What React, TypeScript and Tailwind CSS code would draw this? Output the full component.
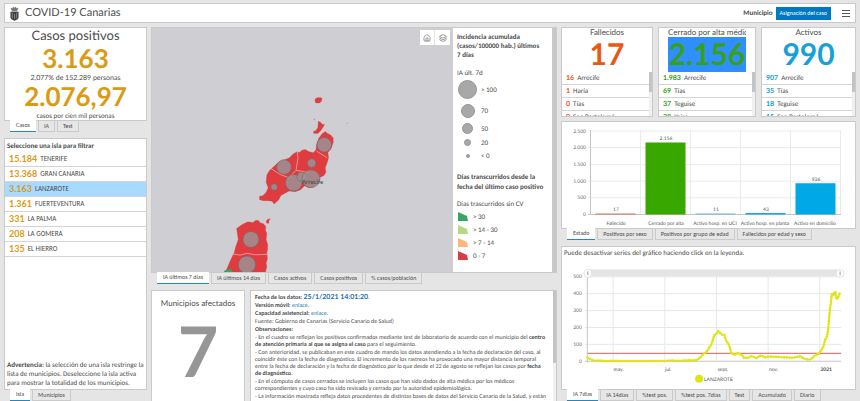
import type { ReactNode } from "react";
import { House, Layers } from "lucide-react";

const card = "bg-white border border-[#cacaca] overflow-hidden";
const display = "font-['Lato','Liberation_Sans',sans-serif]";

function Tabs({ items, label }: { items: string[]; label: string }) {
  return (
    <div role="tablist" aria-label={label} className="flex gap-[2px] pl-[6px] h-[12px] shrink-0 -mt-px relative">
      {items.map((t, i) => (
        <button
          key={t}
          role="tab"
          aria-selected={i === 0}
          className={
            i === 0
              ? "bg-white border-b border-[#2a86b8] px-[6px] text-[6px] leading-[11px] whitespace-nowrap text-[#4c4c4c]"
              : "bg-[#e6e6e6] border border-[#cacaca] px-[5px] text-[6px] leading-[10px] whitespace-nowrap text-[#4c4c4c]"
          }
        >
          {t}
        </button>
      ))}
    </div>
  );
}

const islands: [string, string][] = [
  ["15.184", "TENERIFE"],
  ["13.368", "GRAN CANARIA"],
  ["3.163", "LANZAROTE"],
  ["1.361", "FUERTEVENTURA"],
  ["331", "LA PALMA"],
  ["208", "LA GOMERA"],
  ["135", "EL HIERRO"],
];

function Crest() {
  return (
    <svg viewBox="0 0 20 32" className="w-[9px] h-[15px]" aria-hidden="true">
      <path d="M3 8 1 3l4 2 2-4 3 2 3-2 2 4 4-2-2 5Z" fill="#777" />
      <path d="M4 9h12v2H4Z" fill="#333" />
      <path d="M1 12h18v13q0 4-9 7-9-3-9-7Z" fill="#3c3c3c" />
      <path d="M5 14v13M10 17v11M15 14v13" stroke="#aaa" strokeWidth="1.5" />
    </svg>
  );
}

function Stat({
  title,
  value,
  rows,
  tone,
  selected,
}: {
  title: string;
  value: string;
  rows: [string, string][];
  tone: string;
  selected?: boolean;
}) {
  return (
    <section className={`${card} flex flex-col min-w-0`}>
      <div className={`${display} h-[44px] shrink-0 flex flex-col items-center overflow-hidden ${selected ? "mx-[9px]" : ""}`}>
        <h2 className="text-[8px] leading-[9px] whitespace-nowrap text-[#4c4c4c] max-w-full overflow-hidden shrink-0">{title}</h2>
        <p className={`text-[30px] leading-[35px] font-bold ${tone} ${selected ? "bg-[#2f8fff] w-full text-center" : ""}`}>{value}</p>
      </div>
      <div className="flex flex-1 min-h-0">
        <ul className="flex-1 overflow-hidden">
          {rows.map(([n, name]) => (
            <li key={name} className="h-[13px] border-b border-[#d4d4d4] pl-[4px] text-[7px] leading-[12px] whitespace-nowrap flex gap-[3px]">
              <span className={`${display} font-bold ${tone}`}>{n}</span>
              <span className="text-[#4c4c4c]">{name}</span>
            </li>
          ))}
        </ul>
        <div className="w-[3px] bg-[#f0f0f0]">
          <div className="h-[20px] bg-[#c4c4c4]" />
        </div>
      </div>
    </section>
  );
}

function IslandMap() {
  const bubbles = [
    [343, 193, 22], [305, 248, 13], [222, 260, 22], [192, 320, 10],
    [251, 307, 25], [275, 289, 14], [303, 295, 27], [122, 478, 24], [110, 554, 26],
  ];
  return (
    <svg viewBox="-177 -159 909 735" preserveAspectRatio="xMidYMid slice" className="w-full h-full" role="img" aria-label="Mapa de Lanzarote y Fuerteventura">
      <g fill="#e03c40" stroke="#c9484c" strokeWidth="1">
        <path d="M316 54l8-4 12 2-1 9-6 6-11 0-3-6Z" />
        <path d="M325 122l7 3 5 6 7 1-6 10-7 10-8 7-12-1 0-5 8-4 5-9Z" />
        <path d="M336 160L346 153 352 158 362 163 370 172 370 186 364 204 354 216 356 232 352 246 346 262 348 276 341 286 328 292 322 310 308 320 296 322 284 316 272 328 256 334 238 332 222 340 212 346 206 358 198 366 192 371 186 363 174 361 160 361 148 358 148 348 158 346 168 336 174 322 168 306 170 284 178 270 196 254 208 243 224 238 238 232 250 220 261 214 268 216 276 209 286 207 296 213 310 217 318 208 320 192 326 174Z" />
        <path d="M168 423l4-5 8-3-4 8 0 6-6 0Z" />
        <path d="M79 445l18-13 16-7 15 2 9-7 8 1 5 7 10 3 7 8-1 12 4 8-2 20 5 15-1 16-2 8 2 17-4 15 2 10-4 16-3 10H40l10-20 10-24 12-25 4-16 8-23Z" />
      </g>
      <path d="M40 576q4-9 24-8l4 8Z" fill="#2fa864" />
      <path d="M320 212l32 20M182 264l28 18 26 10 22-22 40 6M262 214l2 18-6 38M60 521l30 4 20-5 26 4 34-1" fill="none" stroke="#f2bfc0" strokeWidth="2" />
      {bubbles.map(([x, y, r]) => (
        <circle key={`${x}-${y}`} cx={x} cy={y} r={r} fill="#989698" fillOpacity="0.8" stroke="#77696b" strokeWidth="2" />
      ))}
      <text x="308" y="311" textAnchor="middle" fontSize="20" fill="#444">Arrecife</text>
      <path d="M312 118l3-4M411 128h2" stroke="#667" strokeWidth="2" />
    </svg>
  );
}

const sizes: [string, string, string][] = [
  ["> 100", "size-[19px]", "h-[21px]"],
  ["70", "size-[14px]", "h-[21px]"],
  ["50", "size-[11px]", "h-[14px]"],
  ["20", "size-[7px]", "h-[14px]"],
  ["< 0", "size-[4px]", "h-[13px]"],
];

const days: [string, string][] = [
  ["> 30", "#3ba462"],
  ["> 14 - 30", "#b4da84"],
  ["> 7 - 14", "#fbb87c"],
  ["0 - 7", "#d83c44"],
];

function Legend() {
  return (
    <aside className="w-[103px] shrink-0 bg-white flex">
      <div className="flex-1 pl-[4px] pt-[4px] text-[#4c4c4c]">
        <h3 className="text-[7px] leading-[9px] font-bold whitespace-nowrap">
          Incidencia acumulada<br />(casos/100000 hab.) últimos<br />7 días
        </h3>
        <p className="mt-[9px] text-[7px] leading-[9px]">IA últ. 7d</p>
        <ul className="mt-[2px]">
          {sizes.map(([t, s, h]) => (
            <li key={t} className={`flex items-center gap-[3px] text-[7px] leading-[9px] ${h}`}>
              <span className="w-[21px] flex justify-center">
                <span className={`rounded-full bg-[#a8a8a8] border border-[#969696] ${s}`} />
              </span>
              {t}
            </li>
          ))}
        </ul>
        <h3 className="mt-[10px] text-[7px] leading-[10px] font-bold whitespace-nowrap">
          Días transcurridos desde la<br />fecha del último caso positivo
        </h3>
        <p className="mt-[7px] text-[7px] leading-[9px]">Días trascurridos sin CV</p>
        <ul className="mt-[2px]">
          {days.map(([t, c]) => (
            <li key={t} className="h-[13px] flex items-center gap-[5px] pl-[1px] text-[7px] leading-[9px]">
              <svg viewBox="0 0 10 9" className="w-[10px] h-[9px]" aria-hidden="true">
                <path d="M0 0 9 4 10 9H0Z" fill={c} />
              </svg>
              {t}
            </li>
          ))}
        </ul>
      </div>
      <div className="w-[4px] bg-[#e8e8e8]">
        <div className="h-full bg-[#c8c8c8]" />
      </div>
    </aside>
  );
}

function BarChart() {
  const bars: [string, string, number, string, number][] = [
    ["Fallecido", "17", 17, "#c8765a", 55],
    ["Cerrado por alta", "2.156", 2156, "#38a800", 105],
    ["Activo hosp. en UCI", "11", 11, "#6fb4d8", 154],
    ["Activo hosp. en planta", "43", 43, "#00a9e6", 204],
    ["Activo en domicilio", "936", 936, "#00a9e6", 254],
  ];
  const ticks = ["0", "500", "1.000", "1.500", "2.000", "2.500"];
  return (
    <svg viewBox="1 1 293 106" className={`w-full h-full ${display}`} role="img" aria-label="Casos por estado">
      {ticks.map((t, i) => (
        <g key={t}>
          <path d={`M27 ${93.5 - i * 16.7}H280`} stroke={i ? "#ebebeb" : "#c4c4c4"} strokeWidth="1" />
          <text x="25" y={95 - i * 16.7} textAnchor="end" fontSize="5" fill="#666">{t}</text>
        </g>
      ))}
      {[0, 1, 2, 3, 4, 5].map((i) => (
        <path key={i} d={`M${29.5 + i * 50} 9V93`} stroke={i ? "#ebebeb" : "#c4c4c4"} strokeWidth="1" />
      ))}
      {bars.map(([name, v, n, c, tx], i) => {
        const h = Math.max(1, n * 0.0334);
        return (
          <g key={name}>
            <rect x={34.5 + i * 50} y={93.5 - h} width="40" height={h} fill={c} />
            <text x={55 + i * 50} y={91 - h} textAnchor="middle" fontSize="5" fill="#555">{v}</text>
            <text x={tx} y="104" textAnchor="middle" fontSize="5" fill="#555">{name}</text>
          </g>
        );
      })}
    </svg>
  );
}

const series =
  "95,341 100,344 108,348 115,351 130,350 150,352 170,351 190,352 210,352 240,352 270,352 300,352 330,352 350,350 360,351 375,351 390,350 405,350 420,350 428,347 434,343 440,336 446,329 452,326 458,320 464,309 470,300 474,286 478,274 484,270 490,261 495,266 500,272 508,272 512,286 518,296 524,306 528,326 534,331 540,333 548,328 555,331 562,334 568,343 580,342 590,337 600,341 608,343 614,336 622,336 632,341 642,338 655,339 670,339 685,341 700,341 715,342 725,340 736,337 745,342 755,346 765,348 772,345 778,338 786,334 796,328 802,318 808,308 812,290 818,278 822,260 824,232 827,198 830,178 833,148 838,152 843,141 847,165 852,160 857,147";

function LineChart() {
  return (
    <svg viewBox="0 0 295 127" className={`w-full h-full ${display}`} role="img" aria-label="Incidencia acumulada a 7 días en Lanzarote">
      {[0, 1, 2, 3, 4, 5].map((i) => (
        <g key={i}>
          <path d={`M23 ${99.5 - i * 17}H281`} stroke={i ? "#e8e8e8" : "#c4c4c4"} strokeWidth="1" />
          <text x="20" y={101 - i * 17} textAnchor="end" fontSize="5" fill="#666">{i * 100}</text>
        </g>
      ))}
      {[25.5, 51.5, 103.5, 155.5, 207.5, 259.5].map((x, i) => (
        <path key={x} d={`M${x} 14V101`} stroke={i ? "#e8e8e8" : "#c4c4c4"} strokeWidth="1" />
      ))}
      <rect x="26" y="7" width="255" height="7" fill="#e4e4e4" />
      {[26, 280].map((x) => (
        <g key={x}>
          <circle cx={x} cy="11" r="4" fill="#fff" stroke="#e4e4e4" strokeWidth="1" />
          <path d={`M${x} 9v4`} stroke="#999" strokeWidth="1" />
        </g>
      ))}
      <path d="M26 91.5H281" stroke="#c9605c" strokeWidth="1" />
      <g transform="translate(-6 -18) scale(0.3333)" fill="none" stroke="#dfe510">
        <polyline points={series} strokeWidth="3" />
        <polyline points={series} strokeWidth="8" strokeLinecap="round" strokeDasharray="0.1 8" />
      </g>
      {([["may.", 57], ["jul.", 107], ["sept.", 162], ["nov.", 213]] as [string, number][]).map(([t, x]) => (
        <text key={t} x={x} y="109" textAnchor="middle" fontSize="5" fill="#555">{t}</text>
      ))}
      <text x="266" y="109" textAnchor="middle" fontSize="5" fontWeight="bold" fill="#444">2021</text>
      <circle cx="138" cy="117" r="4" fill="#dfe510" />
      <text x="143" y="119" fontSize="5" fill="#555">LANZAROTE</text>
    </svg>
  );
}

function Para({ children }: { children: ReactNode }) {
  return <p className="whitespace-nowrap">{children}</p>;
}

export default function App() {
  return (
    <div className="h-screen bg-[#e5e5e5] px-[4px] pt-[3px] flex flex-col gap-[4px] overflow-hidden font-['Carlito','Lato','Liberation_Sans',sans-serif] text-[#4c4c4c] [text-rendering:geometricPrecision]">
      <header className="h-[20px] shrink-0 bg-white border border-[#cacaca] flex items-center px-[5px]">
        <Crest />
        <h1 className={`${display} ml-[6px] text-[11px] leading-[16px]`}>COVID-19 Canarias</h1>
        <span id="mun" className="ml-auto text-[7px] leading-[12px] font-bold">Municipio</span>
        <button aria-labelledby="mun asg" className="ml-[3px] h-[13px] bg-[#0079c1] px-[4px] text-[6px] leading-[13px] text-white">
          <span id="asg">Asignación del caso</span>
        </button>
        <button aria-label="Menú" className="ml-[11px] flex flex-col gap-[2px]">
          <span className="w-[8px] h-px bg-[#555]" />
          <span className="w-[8px] h-px bg-[#555]" />
          <span className="w-[8px] h-px bg-[#555]" />
        </button>
      </header>

      <main className="flex-1 min-h-0 grid grid-cols-[143fr_406fr_295fr] gap-[4px]">
        <div className="flex flex-col min-w-0 min-h-0">
          <section className={`${card} h-[94px] shrink-0 flex flex-col items-center`}>
            <h2 className={`${display} text-[13px] leading-[15px]`}>Casos positivos</h2>
            <p className={`${display} text-[26px] leading-[31px] font-bold text-[#dc9a14]`}>3.163</p>
            <p className={`${display} text-[7px] leading-[8px]`}>2,077% de 152.289 personas</p>
            <p className={`${display} text-[26px] leading-[29px] font-bold text-[#dc9a14]`}>2.076,97</p>
            <p className="text-[7px] leading-[9px]">casos por cien mil personas</p>
          </section>
          <Tabs label="Indicadores" items={["Casos", "IA", "Test"]} />
          <section className={`${card} mt-[6px] flex-1 min-h-0 flex flex-col`}>
            <h2 className="pl-[2px] h-[13px] text-[7px] leading-[13px] font-bold">Seleccione una isla para filtrar</h2>
            <ul>
              {islands.map(([n, name]) => (
                <li key={name} className="h-[15px]">
                  <button
                    aria-pressed={name === "LANZAROTE"}
                    className={`w-full h-full border-b border-[#d4d4d4] pl-[4px] flex items-center gap-[3px] text-left ${name === "LANZAROTE" ? "bg-[#a8daff]" : ""}`}
                  >
                    <span className={`${display} text-[9px] leading-[14px] font-bold text-[#dc9a14]`}>{n}</span>
                    <span className="text-[7px] leading-[14px]">{name}</span>
                  </button>
                </li>
              ))}
            </ul>
            <p className="mt-auto mb-[2px] pl-[2px] text-[7px] leading-[9px] whitespace-nowrap">
              <b>Advertencia:</b> la selección de una isla restringe la<br />
              lista de municipios. Deseleccione la isla activa<br />
              para mostrar la totalidad de los municipios.
            </p>
          </section>
          <Tabs label="Listado" items={["Isla", "Municipios"]} />
        </div>

        <div className="flex flex-col min-w-0 min-h-0">
          <section className="flex-1 min-h-0 flex border border-[#cacaca] bg-[#cfcfd3]">
            <div className="flex-1 min-w-0 relative">
              <div className="absolute inset-0 overflow-hidden">
                <IslandMap />
              </div>
              <div className="absolute top-[2px] right-[3px] flex bg-white">
                <button aria-label="Inicio" className="size-[15px] flex items-center justify-center border-r border-[#e4e4e4]">
                  <House size={8} strokeWidth={2} color="#666" />
                </button>
                <button aria-label="Capas" className="size-[15px] flex items-center justify-center">
                  <Layers size={8} strokeWidth={2} color="#666" />
                </button>
              </div>
            </div>
            <Legend />
          </section>
          <Tabs label="Capas del mapa" items={["IA últimos 7 días", "IA últimos 14 días", "Casos activos", "Casos positivos", "% casos/población"]} />
          <div className="mt-[6px] h-[111px] shrink-0 flex gap-[5px]">
            <section className={`${card} ${display} w-[94px] shrink-0 border-b-0 text-center`}>
              <h2 className="pt-[7px] text-[8px] leading-[10px] whitespace-nowrap">Municipios afectados</h2>
              <p className="text-[70px] leading-[84px] font-bold text-[#969696]">7</p>
            </section>
            <section className={`${card} flex-1 min-w-0 border-b-0 flex`}>
              <div className="flex-1 min-w-0 overflow-hidden pl-[4px] pt-[3px] flex flex-col gap-px text-[6px] leading-[7px]">
                <Para><b>Fecha de los datos:</b> <b className={`${display} text-[7px] text-[#1c6fb5]`}>25/1/2021 14:01:20</b>.</Para>
                <Para><b>Versión móvil:</b> <a href="#movil" className="text-[#1481a8]">enlace</a>.</Para>
                <Para><b>Capacidad asistencial:</b> <a href="#capacidad" className="text-[#1481a8]">enlace</a>.</Para>
                <Para>Fuente: Gobierno de Canarias (Servicio Canario de Salud)</Para>
                <Para><b>Observaciones:</b></Para>
                <Para>
                  - En el cuadro se reflejan los positivos confirmados mediante test de laboratorio de acuerdo con el municipio del <b>centro</b><br />
                  <b>de atención primaria al que se asigna el caso</b> para el seguimiento.
                </Para>
                <Para>
                  - Con anterioridad, se publicaban en este cuadro de mando los datos atendiendo a la fecha de declaración del caso, al<br />
                  coincidir éste con la fecha de diagnóstico. El incremento de los rastreos ha provocado una mayor distancia temporal<br />
                  entre la fecha de declaración y la fecha de diagnóstico por lo que desde el 22 de agosto se reflejan los casos por <b>fecha</b><br />
                  <b>de diagnóstico</b>.
                </Para>
                <Para>
                  - En el cómputo de casos cerrados se incluyen los casos que han sido dados de alta médica por los médicos<br />
                  correspondientes y cuyo caso ha sido revisado y cerrado por la autoridad epidemiológica.
                </Para>
                <Para>- La información mostrada refleja datos procedentes de distintas bases de datos del Servicio Canario de la Salud, y están</Para>
              </div>
              <div className="w-[3px] bg-[#f0f0f0]">
                <div className="h-[72px] bg-[#c4c4c4]" />
              </div>
            </section>
          </div>
        </div>

        <div className="flex flex-col min-w-0 min-h-0">
          <div className="h-[90px] shrink-0 grid grid-cols-[92fr_98fr_95fr] gap-[5px]">
            <Stat title="Fallecidos" value="17" tone="text-[#e85a14]" rows={[["16", "Arrecife"], ["1", "Haría"], ["0", "Tías"], ["0", "San Bartolomé"]]} />
            <Stat title="Cerrado por alta médica" value="2.156" tone="text-[#38a014]" selected rows={[["1.983", "Arrecife"], ["69", "Tías"], ["37", "Teguise"], ["28", "Yaiza"]]} />
            <Stat title="Activos" value="990" tone="text-[#18a0d8]" rows={[["907", "Arrecife"], ["35", "Tías"], ["18", "Teguise"], ["15", "San Bartolomé"]]} />
          </div>
          <section className={`${card} mt-[4px] h-[108px] shrink-0`}>
            <BarChart />
          </section>
          <Tabs label="Distribución" items={["Estado", "Positivos por sexo", "Positivos por grupo de edad", "Fallecidos por edad y sexo"]} />
          <section className={`${card} mt-[6px] flex-1 min-h-0 flex flex-col`}>
            <p className="pl-[2px] h-[15px] shrink-0 text-[7px] leading-[12px] whitespace-nowrap">Puede desactivar series del gráfico haciendo click en la leyenda.</p>
            <div className="flex-1 min-h-0">
              <LineChart />
            </div>
          </section>
          <Tabs label="Series" items={["IA 7días", "IA 14días", "%test pos.", "%test pos. 7días", "Test", "Acumulado", "Diario"]} />
        </div>
      </main>
    </div>
  );
}
